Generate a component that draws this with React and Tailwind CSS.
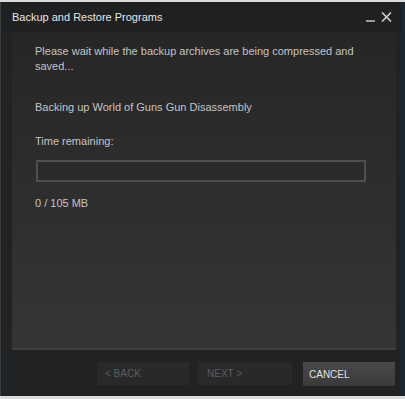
export default function App() {
  const font = { fontFamily: '"Liberation Sans", Arial, sans-serif' };
  return (
    <div className="w-[405px] h-[399px] bg-[#dcdcdc] pt-[2px] pb-[3px]" style={font}>
      <div className="h-[394px] flex flex-col bg-[#212224] border-l-[1px] border-l-[#3a3d40] border-r-[4px] border-r-[#1b2630]">
        <div className="h-[30px] flex items-center pl-[11px] pr-[9px] bg-[#1e2022] text-[11px] text-[#e6e6e6]">
          <span className="mt-[1px]">Backup and Restore Programs</span>
          <div className="ml-auto flex items-end gap-[6px]">
            <div className="w-[9px] h-[2px] bg-[#9a9a9a] mb-[1px]" />
            <svg width="11" height="10" viewBox="0 0 11 10" className="mb-[1px]">
              <path d="M1 0.5L10 9.5M10 0.5L1 9.5" stroke="#d0d0d0" strokeWidth="1.6" />
            </svg>
          </div>
        </div>
        <div className="ml-[11px] mr-[5px] h-[318px] bg-gradient-to-b from-[#262627] to-[#353535] border-b-[2px] border-b-[#3e3e3e] pl-[23px] pt-[12px] text-[11px] text-[#c4c4c4] leading-[15px]">
          <div className="w-[325px]">Please wait while the backup archives are being compressed and saved...</div>
          <div className="mt-[26px]">Backing up World of Guns Gun Disassembly</div>
          <div className="mt-[19px]">Time remaining:</div>
          <div className="mt-[11px] ml-[1px] w-[330px] h-[22px] border-[2px] border-[#4f4f4f] bg-[#2b2b2c]" />
          <div className="mt-[14px]">0 / 105 MB</div>
        </div>
        <div className="flex items-start pt-[12px] pl-[96px] gap-[9px] text-[10px]">
          <div className="w-[92px] h-[23px] bg-[#29292b] text-[#5e5e5e] flex items-center pl-[8px]">&lt; BACK</div>
          <div className="w-[94px] h-[23px] bg-[#29292b] text-[#5e5e5e] flex items-center pl-[9px]">NEXT &gt;</div>
          <div className="ml-[2px] w-[92px] h-[24px] bg-gradient-to-b from-[#4a4a4a] to-[#3a3a3a] text-[#e0e0e0] flex items-center pl-[6px]">CANCEL</div>
        </div>
      </div>
    </div>
  );
}
